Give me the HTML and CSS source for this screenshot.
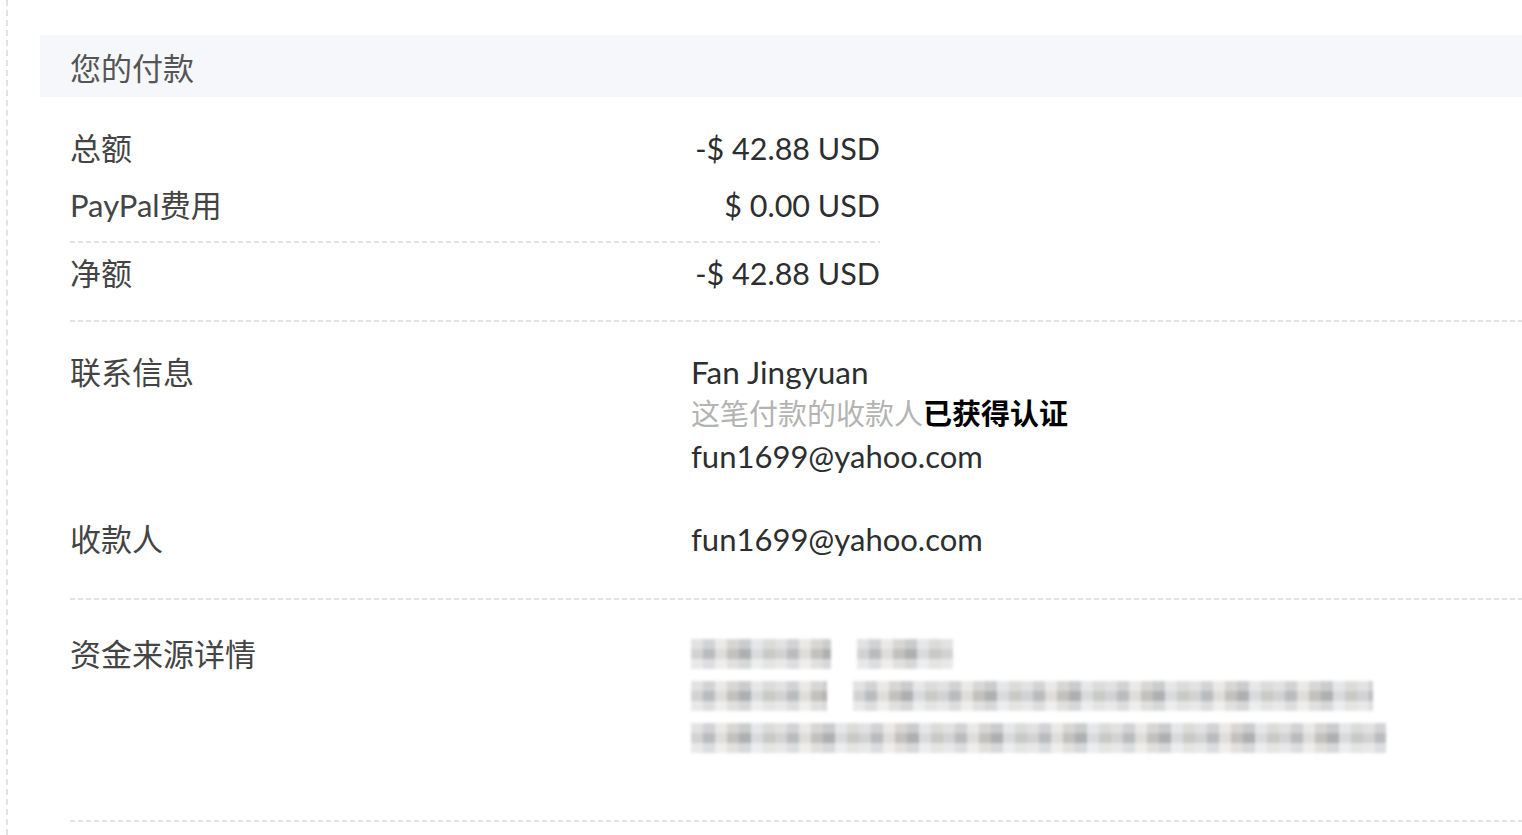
FILE: index.html
```
<!DOCTYPE html>
<html lang="zh-CN">
<head>
    <meta charset="UTF-8">
    <meta name="viewport" content="width=device-width, initial-scale=1.0">
    <title>您的付款</title>
    <link rel="stylesheet" href="styles.css">
</head>
<body>

<div class="page">
    <!-- Section header -->
    <div class="section-head">您的付款</div>

    <div class="section-body">
        <!-- Amounts -->
        <div class="amounts">
            <div class="amount-row first">
                <span class="label">总额</span>
                <span class="money">-$ 42.88 USD</span>
            </div>
            <div class="amount-row">
                <span class="label">PayPal费用</span>
                <span class="money">$ 0.00 USD</span>
            </div>
            <div class="dash short"></div>
            <div class="amount-row net">
                <span class="label">净额</span>
                <span class="money">-$ 42.88 USD</span>
            </div>
        </div>

        <div class="dash"></div>

        <!-- Contact info -->
        <div class="info-row contact">
            <div class="label">联系信息</div>
            <div class="value">
                <div class="name">Fan Jingyuan</div>
                <div class="note">这笔付款的收款人<b>已获得认证</b></div>
                <div>fun1699@yahoo.com</div>
            </div>
        </div>

        <div class="info-row payee">
            <div class="label">收款人</div>
            <div class="value">fun1699@yahoo.com</div>
        </div>

        <div class="dash"></div>

        <!-- Funding source (blurred) -->
        <div class="info-row funding">
            <div class="label">资金来源详情</div>
            <div class="value blurred">
                <div class="blur-line">
                    <span class="mosaic" style="width: 140px"></span>
                    <span class="mosaic" style="width: 96px"></span>
                </div>
                <div class="blur-line">
                    <span class="mosaic" style="width: 136px"></span>
                    <span class="mosaic" style="width: 520px"></span>
                </div>
                <div class="blur-line">
                    <span class="mosaic" style="width: 695px"></span>
                </div>
            </div>
        </div>

        <div class="dash"></div>
    </div>
</div>

</body>
</html>
```

FILE: styles.css
```
/* Payment details */
body {
    margin: 0;
    padding: 0;
    background-color: #ffffff;
    font-family: Lato, "Noto Sans CJK SC", sans-serif;
    font-size: 30px;
    color: #2c2e2f;
    overflow: hidden;
}
.page {
    margin-left: 6px;
    padding-top: 35px;
    padding-left: 32px;
    min-height: 100vh;
    border-left: 2px dashed #e3e3e3;
    box-sizing: border-box;
}
.section-head {
    background-color: #f5f7fa;
    height: 62px;
    padding-left: 30px;
    display: flex;
    align-items: center;
    color: #555555;
    font-size: 31px;
}
.section-body {
    padding-left: 30px;
}
.label {
    color: #444444;
    font-size: 31px;
}
.amounts {
    width: 810px;
    padding-top: 30px;
}
.amount-row {
    display: flex;
    justify-content: space-between;
    line-height: 42px;
    margin-bottom: 15px;
}
.amount-row.net {
    margin-top: 9px;
    margin-bottom: 26px;
}
.money {
    color: #2c2e2f;
    font-size: 30.5px;
}
.dash {
    height: 2px;
    background: repeating-linear-gradient(90deg, #e3e3e3 0 5px, transparent 5px 8px);
}
.dash.short {
    margin-top: 2px;
}
.info-row {
    display: grid;
    grid-template-columns: 621px 1fr;
    line-height: 42px;
}
.info-row .value {
    font-size: 31px;
}
.info-row.contact {
    padding-top: 29px;
}
.info-row.payee {
    padding-top: 41px;
    padding-bottom: 38px;
}
.info-row.funding {
    padding-top: 33px;
    padding-bottom: 61px;
}
.name {
    color: #2c2e2f;
    font-size: 31.5px;
}
.note {
    color: #b3b3b3;
    font-size: 29px;
}
.note b {
    color: #000000;
}
.blur-line {
    height: 42px;
    display: flex;
    align-items: center;
    gap: 26px;
}
.mosaic {
    display: inline-block;
    height: 30px;
    filter: blur(1.5px);
    opacity: 0.8;
    background:
        linear-gradient(180deg, rgba(255,255,255,0.35) 0 33%, transparent 33% 66%, rgba(255,255,255,0.5) 66%),
        repeating-linear-gradient(90deg, #c9c7c9 0 12px, #a9abae 12px 24px, #d7d5d2 24px 36px, #b4b2ae 36px 48px, #9b9c9e 48px 60px, #d0d2d5 60px 72px, #bcbcb8 72px 84px);
}
```
